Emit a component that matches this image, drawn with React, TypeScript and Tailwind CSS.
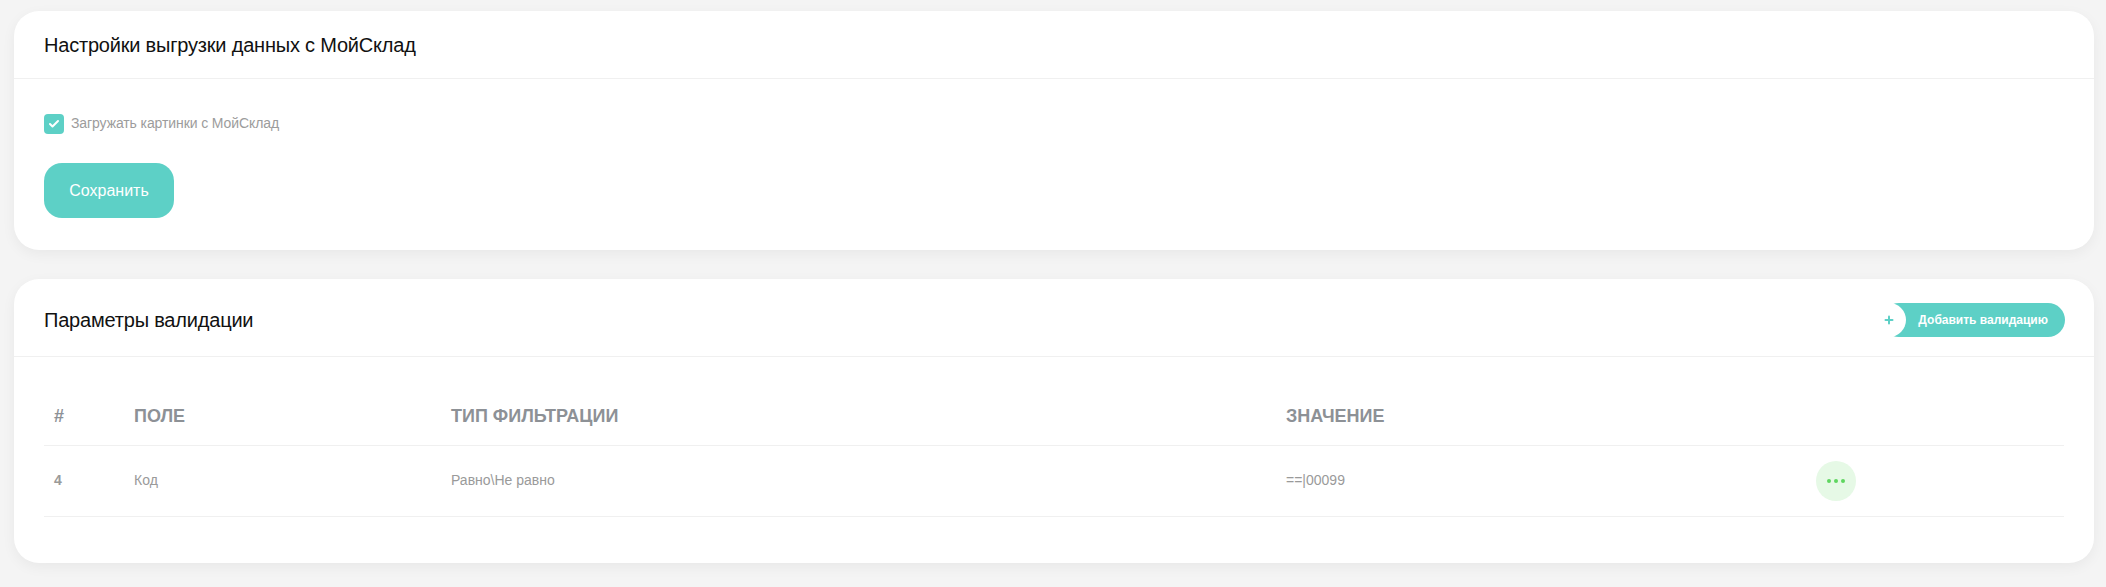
import { Check, Plus } from "lucide-react";

type ValidationRow = {
  id: number;
  field: string;
  filterType: string;
  value: string;
};

const rows: ValidationRow[] = [{ id: 4, field: "Код", filterType: "Равно\\Не равно", value: "==|00099" }];

const headCell = "px-[10px] text-left text-[18px] font-bold uppercase text-[#8d9196]";
const bodyCell = "px-[10px] text-[14px] text-[#9a9a9a]";
const cardClass = "rounded-[25px] bg-white shadow-[0_4px_14px_rgba(0,0,0,0.05)]";

export default function App() {
  return (
    <div className="min-h-[587px] bg-[#f4f4f4] pb-[24px] pl-[14px] pr-[12px] pt-[11px] font-['Liberation_Sans',Arial,sans-serif]">
      <section className={cardClass}>
        <div className="flex h-[68px] items-center border-b border-[#f0f0f0] px-[30px]">
          <h2 className="text-[20px] font-normal tracking-[-0.2px] text-[#111]">Настройки выгрузки данных с МойСклад</h2>
        </div>
        <div className="px-[30px] pb-[32px] pt-[34px]">
          <label className="flex items-center gap-[7px]">
            <span className="flex h-[20px] w-[20px] items-center justify-center rounded-[4px] bg-[#5dd0c6]">
              <Check className="h-[12px] w-[12px] text-white" strokeWidth={4} />
            </span>
            <span className="text-[14px] tracking-[-0.1px] text-[#9c9c9c]">Загружать картинки с МойСклад</span>
          </label>
          <button className="mt-[29px] flex h-[55px] w-[130px] items-center justify-center rounded-[18px] bg-[#5dd0c6] text-[16px] text-white">
            Сохранить
          </button>
        </div>
      </section>

      <section className={`mt-[29px] ${cardClass}`}>
        <div className="flex items-center justify-between border-b border-[#f0f0f0] pb-[19px] pl-[30px] pr-[29px] pt-[24px]">
          <h2 className="text-[20px] font-normal tracking-[-0.2px] text-[#111]">Параметры валидации</h2>
          <button className="flex items-center">
            <span className="relative z-10 -mr-[24px] flex h-[34px] w-[34px] items-center justify-center rounded-full bg-white">
              <Plus className="h-[12px] w-[12px] text-[#5dd0c6]" strokeWidth={4} />
            </span>
            <span className="flex h-[34px] items-center rounded-full bg-[#5dd0c6] pl-[36px] pr-[17px] text-[12px] font-bold text-white">
              Добавить валидацию
            </span>
          </button>
        </div>
        <div className="px-[30px] pb-[46px] pt-[32px]">
          <table className="w-full table-fixed border-collapse">
            <colgroup>
              <col className="w-[80px]" />
              <col className="w-[317px]" />
              <col className="w-[835px]" />
              <col className="w-[530px]" />
              <col />
            </colgroup>
            <thead>
              <tr className="h-[56px] border-b border-[#f0f0f0]">
                <th className={`${headCell} text-[15px]`}>#</th>
                <th className={headCell}>Поле</th>
                <th className={headCell}>Тип фильтрации</th>
                <th className={headCell}>Значение</th>
                <th className={headCell}></th>
              </tr>
            </thead>
            <tbody>
              {rows.map((row) => (
                <tr key={row.id} className="h-[71px] border-b border-[#f0f0f0]">
                  <td className={`${bodyCell} font-bold text-[#8d9196]`}>{row.id}</td>
                  <td className={bodyCell}>{row.field}</td>
                  <td className={bodyCell}>{row.filterType}</td>
                  <td className={bodyCell}>{row.value}</td>
                  <td className={bodyCell}>
                    <button className="flex h-[40px] w-[40px] items-center justify-center gap-[3px] rounded-full bg-[#e6f9e6]">
                      <span className="h-[4px] w-[4px] rounded-full bg-[#5fd660]" />
                      <span className="h-[4px] w-[4px] rounded-full bg-[#5fd660]" />
                      <span className="h-[4px] w-[4px] rounded-full bg-[#5fd660]" />
                    </button>
                  </td>
                </tr>
              ))}
            </tbody>
          </table>
        </div>
      </section>
    </div>
  );
}
